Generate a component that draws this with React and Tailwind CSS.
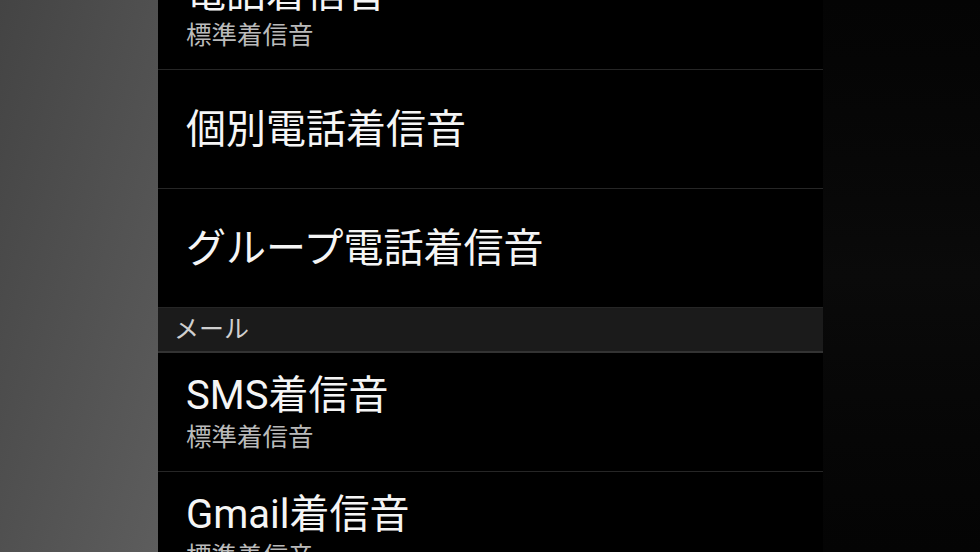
const font = { fontFamily: '"Roboto", "Noto Sans CJK JP", sans-serif' };

const rows = [
  { title: "電話着信音", sub: "標準着信音" },
  { title: "個別電話着信音" },
  { title: "グループ電話着信音" },
  { header: "メール" },
  { title: "SMS着信音", sub: "標準着信音" },
  { title: "Gmail着信音", sub: "標準着信音" },
];

function Row({ title, sub }) {
  return (
    <div className="h-[119px] shrink-0 border-b border-[#262626] pl-[28px] flex flex-col justify-center">
      <div className="text-[40px] leading-[48px] text-[#f5f5f5] translate-y-[1px]">{title}</div>
      {sub && <div className="text-[25.5px] leading-[32px] text-[#bababa] mt-[2px]">{sub}</div>}
    </div>
  );
}

function SectionHeader({ label }) {
  return (
    <div className="h-[45px] shrink-0 bg-[#1b1b1b] border-b-2 border-[#333333] pl-[16px] flex items-center">
      <span className="text-[25px] text-[#cfcfcf]">{label}</span>
    </div>
  );
}

export default function App() {
  return (
    <div className="w-[980px] h-[552px] overflow-hidden flex bg-black" style={font}>
      <div className="w-[158px] shrink-0 bg-gradient-to-br from-[#444444] to-[#5d5d5d]" />
      <div className="w-[665px] shrink-0 bg-black flex flex-col">
        <div className="-mt-[49px] flex flex-col">
          {rows.map((r, i) =>
            r.header ? (
              <SectionHeader key={i} label={r.header} />
            ) : (
              <Row key={i} title={r.title} sub={r.sub} />
            )
          )}
        </div>
      </div>
      <div className="flex-1 bg-gradient-to-b from-[#040404] via-[#0a0a0a] to-[#040404]" />
    </div>
  );
}
